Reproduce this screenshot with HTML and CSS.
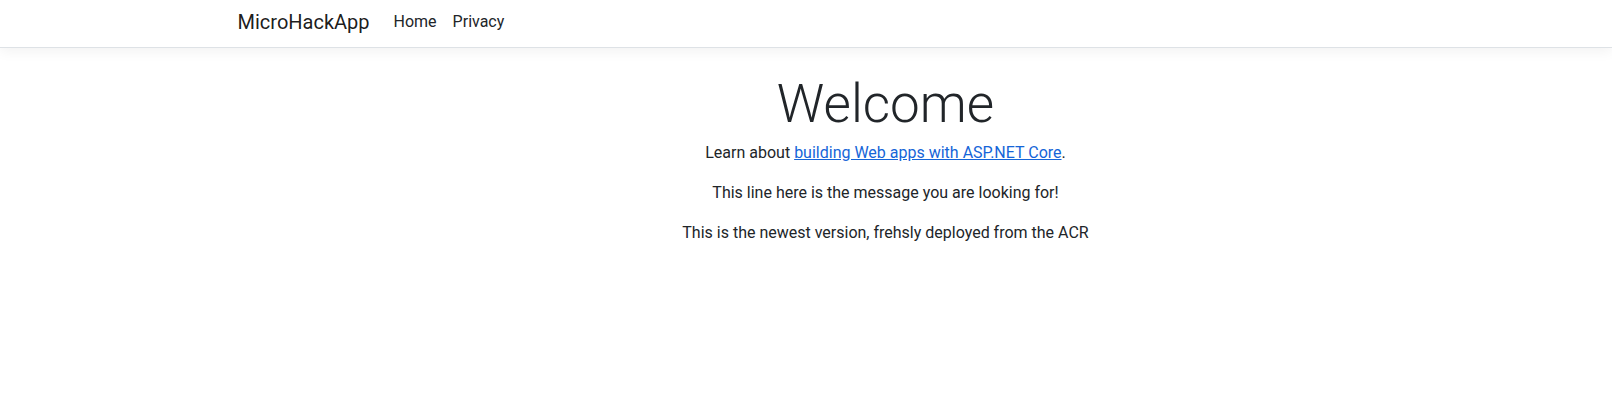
FILE: index.html
```html
<!DOCTYPE html>
<html lang="en">
<head>
<meta charset="utf-8">
<title>Home Page - MicroHackApp</title>
<link rel="stylesheet" href="styles.css">
</head>
<body>
<header>
  <nav class="navbar">
    <div class="container navbar-inner">
      <a class="navbar-brand" href="#">MicroHackApp</a>
      <ul class="navbar-nav">
        <li><a class="nav-link" href="#">Home</a></li>
        <li><a class="nav-link" href="#">Privacy</a></li>
      </ul>
    </div>
  </nav>
</header>
<div class="page">
  <div class="container">
    <main class="main">
      <div class="text-center">
        <h1 class="display-4">Welcome</h1>
        <p>Learn about <a class="link" href="#">building Web apps with ASP.NET Core</a>.</p>
        <p>This line here is the message you are looking for!</p>
        <p>This is the newest version, frehsly deployed from the ACR</p>
      </div>
    </main>
  </div>
</div>
</body>
</html>
```
FILE: styles.css
```css
html {
  overflow: hidden;
}
body {
  margin: 0;
  background: #fff;
  color: #212529;
  font-family: Roboto, "Liberation Sans", sans-serif;
  font-size: 16px;
  line-height: 1.5;
}
.container {
  max-width: 1320px;
  margin: 0 auto;
  padding: 0 12px;
  box-sizing: border-box;
}
.navbar {
  background: #fff;
  border-bottom: 1px solid #dee2e6;
  box-shadow: 0 4px 12px rgba(0, 0, 0, 0.05);
  padding: 7px 0 10px 159px;
  margin-bottom: 16px;
}
.page {
  padding-left: 159px;
}
.navbar-inner {
  display: flex;
  align-items: center;
}
.navbar-brand {
  font-size: 20px;
  line-height: 30px;
  color: rgba(0, 0, 0, 0.9);
  text-decoration: none;
  margin-right: 16px;
}
.navbar-nav {
  display: flex;
  list-style: none;
  margin: 0;
  padding: 0;
}
.nav-link {
  display: block;
  padding: 0 8px;
  line-height: 24px;
  color: #212529;
  text-decoration: none;
}
.main {
  padding-top: 9px;
  padding-bottom: 16px;
}
.text-center {
  text-align: center;
}
.display-4 {
  font-size: 53px;
  font-weight: 300;
  line-height: 1.2;
  margin: 0 0 4px;
}
p {
  margin: 0 0 16px;
}
.link {
  color: #1565d8;
  text-decoration: underline;
}
```
